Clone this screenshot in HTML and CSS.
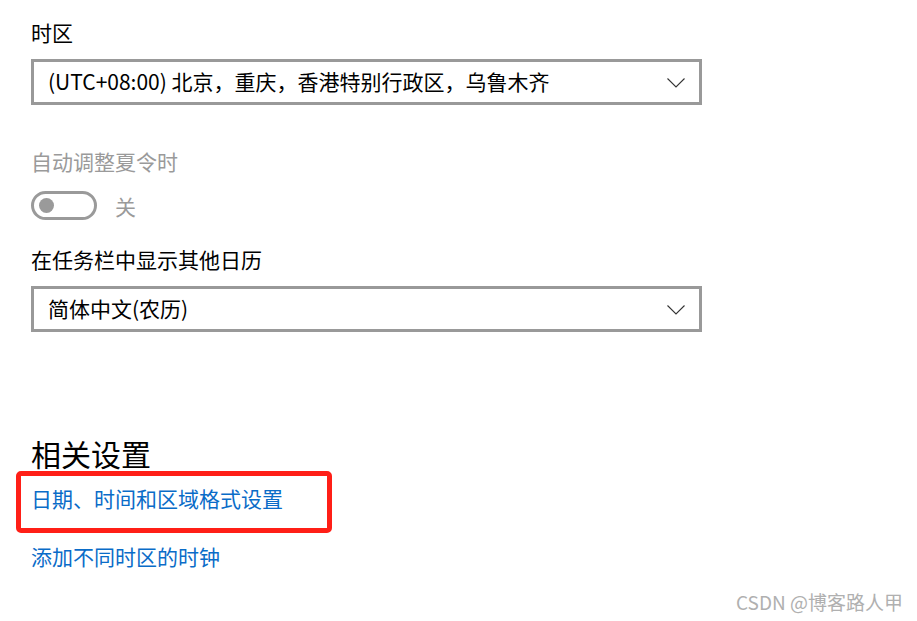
FILE: index.html
```html
<!DOCTYPE html>
<html lang="zh-CN">
<head>
<meta charset="utf-8">
<title>日期和时间</title>
<link rel="stylesheet" href="styles.css">
</head>
<body>
<main class="page">
  <div class="label">时区</div>
  <div class="select">
    <span class="select-text">(UTC+08:00) 北京，重庆，香港特别行政区，乌鲁木齐</span>
    <svg class="chev" width="18" height="10" viewBox="0 0 18 10"><polyline points="0.5,0.5 9,9 17.5,0.5" fill="none" stroke="#333" stroke-width="1.1"/></svg>
  </div>

  <div class="label label-disabled label-dst">自动调整夏令时</div>
  <div class="toggle-row">
    <span class="toggle"><span class="knob"></span></span>
    <span class="toggle-text">关</span>
  </div>

  <div class="label label-cal">在任务栏中显示其他日历</div>
  <div class="select">
    <span class="select-text">简体中文(农历)</span>
    <svg class="chev" width="18" height="10" viewBox="0 0 18 10"><polyline points="0.5,0.5 9,9 17.5,0.5" fill="none" stroke="#333" stroke-width="1.1"/></svg>
  </div>

  <h2 class="heading">相关设置</h2>
  <div class="highlight">
    <a class="link" href="#">日期、时间和区域格式设置</a>
  </div>
  <a class="link link-second" href="#">添加不同时区的时钟</a>
</main>
<div class="watermark">CSDN @博客路人甲</div>
</body>
</html>
```

FILE: styles.css
```css
html, body {
  margin: 0;
  padding: 0;
  background: #ffffff;
}

body {
  width: 917px;
  height: 621px;
  position: relative;
  overflow: hidden;
  font-family: "Noto Sans CJK SC", "Noto Sans", sans-serif;
  color: #000;
}

.page {
  padding: 18px 0 0 31px;
  width: 671px;
}

.label {
  font-size: 21px;
  line-height: 28px;
  height: 28px;
}

.label-disabled {
  color: #9a9a9a;
}

.label-dst {
  margin-top: 42px;
}

.label-cal {
  margin-top: 25px;
}

.select {
  margin-top: 13px;
  height: 46px;
  box-sizing: border-box;
  border: 3px solid #999999;
  display: flex;
  align-items: center;
  justify-content: space-between;
  padding: 0 14px 2px 14px;
}

.select-text {
  font-size: 21px;
  line-height: 28px;
}

.chev {
  display: block;
  margin-top: 3px;
}

.toggle-row {
  margin-top: 16px;
  display: flex;
  align-items: center;
  gap: 18px;
  height: 29px;
}

.toggle {
  width: 66px;
  height: 29px;
  box-sizing: border-box;
  border: 3px solid #9a9a9a;
  border-radius: 15px;
  display: flex;
  align-items: center;
  padding-left: 5px;
}

.knob {
  width: 15px;
  height: 15px;
  border-radius: 50%;
  background: #9a9a9a;
}

.toggle-text {
  font-size: 21px;
  line-height: 28px;
  color: #9a9a9a;
}

.heading {
  margin: 105px 0 2px 0;
  font-size: 30px;
  line-height: 32px;
  font-weight: 400;
}

.highlight {
  margin-left: -15px;
  width: 316px;
  height: 62px;
  box-sizing: border-box;
  border: 5px solid #ff1f17;
  border-radius: 5px;
  padding: 8px 0 0 10px;
}

.link {
  display: block;
  font-size: 21px;
  line-height: 28px;
  color: #0a6cc8;
  text-decoration: none;
}

.link-second {
  margin-top: 9px;
}

.watermark {
  position: absolute;
  right: 14px;
  bottom: 5px;
  font-size: 19px;
  line-height: 28px;
  color: #b0b0b0;
}
```
